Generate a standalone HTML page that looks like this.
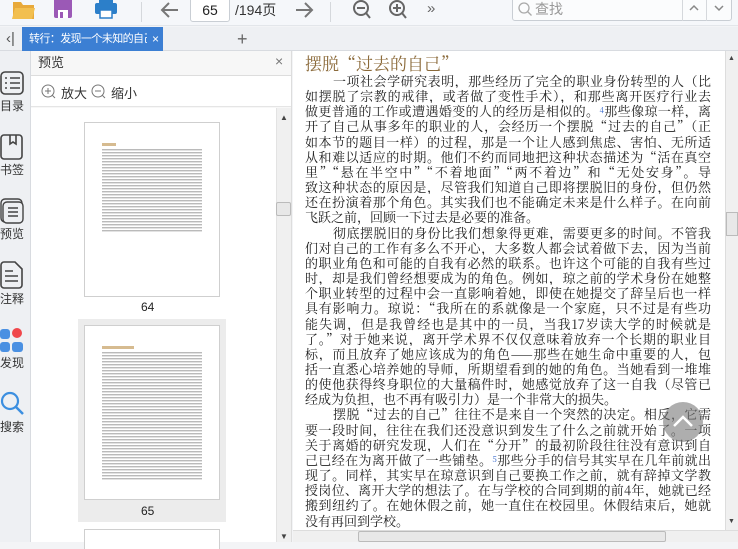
<!DOCTYPE html>
<html><head><meta charset="utf-8">
<style>
*{margin:0;padding:0;box-sizing:border-box}
body{width:738px;height:542px;overflow:hidden;background:#f3f4f6;font-family:"Liberation Sans","Noto Sans CJK SC",sans-serif;position:relative}
.abs{position:absolute}
#tool{left:0;top:0;width:738px;height:26px;background:#f5f7fa;border-bottom:1px solid #e3e6ea}
#tabs{left:0;top:27px;width:738px;height:24px;background:#eef0f3;border-bottom:1px solid #d8dbe0}
#side{left:0;top:51px;width:31px;height:491px;background:#eef0f3;border-right:1px solid #d8dbe0}
.si{position:absolute;left:0;width:30px;font-size:12px;color:#333}
#prev{left:31px;top:51px;width:261px;height:491px;background:#f7f7f7;border-right:1px solid #ddd}
#page{left:293px;top:51px;width:432px;height:479px;background:#fff;padding-top:2px}
.ln{font-family:"Noto Serif CJK SC","Liberation Serif",serif;font-size:13px;color:#222;height:15.17px;line-height:15px;text-align:justify;text-align-last:justify;white-space:nowrap;overflow:hidden;width:406px;margin-left:12px}
.ln.e{text-align-last:left}
.thumb{position:absolute;background:#fff;border:1px solid #cfcfcf}
.tl{position:absolute;background:repeating-linear-gradient(#fff 0,#fff 1.2px,#b5b5b5 1.2px,#c8c8c8 2.4px,#fff 2.4px,#fff 3px)}
</style></head><body>
<div id="tool" class="abs">
 <svg class="abs" style="left:12px;top:0" width="24" height="20"><path d="M1 2h8l2 3h11v14H1z" fill="#e8a93a"/><path d="M3 8h20l-3 11H0z" fill="#f2bf4f"/></svg>
 <svg class="abs" style="left:54px;top:0" width="18" height="19"><rect x="0" y="-2" width="18" height="20" rx="2" fill="#9b59b6"/><rect x="4" y="10" width="10" height="8" fill="#fff"/><rect x="6" y="12" width="3" height="6" fill="#9b59b6"/></svg>
 <svg class="abs" style="left:95px;top:0" width="22" height="19"><rect x="4" y="0" width="14" height="5" fill="#2c7fc9"/><rect x="0" y="3" width="22" height="11" rx="2" fill="#2c7fc9"/><rect x="5" y="10" width="12" height="8" fill="#fff" stroke="#2c7fc9" stroke-width="1.5"/></svg>
 <div class="abs" style="left:141px;top:2px;width:1px;height:20px;background:#d5d8dc"></div>
 <svg class="abs" style="left:160px;top:1px" width="20" height="18"><path d="M18 9H3M9 2L2 9l7 7" stroke="#777" stroke-width="2" fill="none"/></svg>
 <div class="abs" style="left:190px;top:-3px;width:40px;height:25px;background:#fff;border:1px solid #c9ced4;border-radius:3px;font-size:14px;text-align:center;line-height:25px;color:#222">65</div>
 <div class="abs" style="left:235px;top:0;font-size:14px;color:#333;line-height:20px">/194页</div>
 <svg class="abs" style="left:294px;top:1px" width="20" height="18"><path d="M2 9h15M11 2l7 7-7 7" stroke="#777" stroke-width="2" fill="none"/></svg>
 <div class="abs" style="left:330px;top:2px;width:1px;height:20px;background:#d5d8dc"></div>
 <svg class="abs" style="left:352px;top:0" width="20" height="20"><circle cx="9" cy="8" r="7" stroke="#666" stroke-width="2" fill="none"/><path d="M5 8h8M14 13l4 5" stroke="#666" stroke-width="2"/></svg>
 <svg class="abs" style="left:388px;top:0" width="20" height="20"><circle cx="9" cy="8" r="7" stroke="#666" stroke-width="2" fill="none"/><path d="M5 8h8M9 4v8M14 13l4 5" stroke="#666" stroke-width="2"/></svg>
 <div class="abs" style="left:427px;top:0;font-size:15px;color:#666">»</div>
 <div class="abs" style="left:512px;top:-3px;width:220px;height:24px;background:#fbfcfd;border:1px solid #c9ced4;border-radius:3px"></div>
 <svg class="abs" style="left:517px;top:1px" width="16" height="16"><circle cx="7" cy="7" r="5" stroke="#aaa" stroke-width="1.3" fill="none"/><path d="M10.5 10.5l4 4" stroke="#aaa" stroke-width="1.3"/></svg>
 <div class="abs" style="left:535px;top:0;font-size:14px;color:#999;line-height:18px">查找</div>
 <div class="abs" style="left:682px;top:-3px;width:1px;height:24px;background:#d5d8dc"></div>
 <div class="abs" style="left:706px;top:-3px;width:1px;height:24px;background:#d5d8dc"></div>
 <svg class="abs" style="left:688px;top:4px" width="12" height="8"><path d="M2 6l4-4 4 4" stroke="#888" stroke-width="1.5" fill="none"/></svg>
 <svg class="abs" style="left:713px;top:4px" width="12" height="8"><path d="M2 2l4 4 4-4" stroke="#888" stroke-width="1.5" fill="none"/></svg>
</div>
<div id="tabs" class="abs">
 <div class="abs" style="left:6px;top:3px;font-size:15px;color:#555">&lsaquo;|</div>
 <div class="abs" style="left:22px;top:0;width:141px;height:24px;background:#3c7fd3;color:#fff;font-size:11px;letter-spacing:-0.6px;line-height:24px;padding-left:7px;white-space:nowrap;overflow:hidden"><span style="display:inline-block;width:118px;overflow:hidden;vertical-align:top">转行：发现一个未知的自己[www</span></div>
 <div class="abs" style="left:152px;top:0;font-size:12px;color:#fff;line-height:24px">×</div>
 <div class="abs" style="left:237px;top:0;font-size:18px;color:#666;line-height:24px">+</div>
</div>
<div id="side" class="abs">
 <svg class="si" style="top:20px" width="24" height="24"><rect x="1" y="1" width="22" height="22" rx="4" stroke="#444" stroke-width="1.6" fill="none"/><path d="M5 7h2M10 7h10M5 12h2M10 12h10M5 17h2M10 17h10" stroke="#444" stroke-width="1.6"/></svg>
 <div class="si" style="top:46px">目录</div>
 <svg class="si" style="top:83px" width="24" height="26"><rect x="1" y="1" width="21" height="24" rx="3" stroke="#444" stroke-width="1.6" fill="none"/><path d="M10 1v9l3-2 3 2V1" stroke="#444" stroke-width="1.6" fill="none"/></svg>
 <div class="si" style="top:110px">书签</div>
 <svg class="si" style="top:147px" width="26" height="26"><rect x="1" y="1" width="21" height="23" rx="4" stroke="#444" stroke-width="1.4" fill="none"/><rect x="3" y="4" width="20" height="21" rx="4" stroke="#444" stroke-width="1.4" fill="#eef0f3"/><path d="M8 10h10M8 14h10M8 18h10" stroke="#444" stroke-width="1.5"/></svg>
 <div class="si" style="top:174px">预览</div>
 <svg class="si" style="top:210px" width="24" height="28"><path d="M1 4a3 3 0 0 1 3-3h11l7 7v16a3 3 0 0 1-3 3H4a3 3 0 0 1-3-3z" stroke="#444" stroke-width="1.6" fill="none"/><path d="M5 10h8M5 15h13M5 20h13" stroke="#444" stroke-width="1.6"/></svg>
 <div class="si" style="top:239px">注释</div>
 <svg class="si" style="top:276px" width="26" height="26"><rect x="0" y="2" width="10" height="10" rx="3" fill="#4a90e2"/><circle cx="17" cy="6" r="5" fill="#f0474b"/><rect x="0" y="15" width="10" height="10" rx="3" fill="#4a90e2"/><rect x="12" y="15" width="11" height="10" rx="3" fill="#4a90e2"/></svg>
 <div class="si" style="top:303px">发现</div>
 <svg class="si" style="top:340px" width="26" height="26"><circle cx="10" cy="10" r="8" stroke="#3c8fe0" stroke-width="2.2" fill="none"/><path d="M16 16l7 7" stroke="#3c8fe0" stroke-width="2.5"/></svg>
 <div class="si" style="top:367px">搜索</div>
</div>
<div id="prev" class="abs">
 <div class="abs" style="left:0;top:0;width:260px;height:25px;border-bottom:1px solid #ddd;font-size:13px;color:#333;line-height:24px;padding-left:7px">预览</div>
 <div class="abs" style="left:244px;top:2px;font-size:14px;color:#777">×</div>
 <div class="abs" style="left:0;top:25px;width:260px;height:31px;background:#fff;border-bottom:1px solid #e5e5e5"></div>
 <svg class="abs" style="left:10px;top:33px" width="16" height="16"><circle cx="7" cy="7" r="6" stroke="#777" fill="none"/><path d="M4 7h6M7 4v6M11 11l3 3" stroke="#777"/></svg>
 <div class="abs" style="left:30px;top:32px;font-size:13px;color:#333">放大</div>
 <svg class="abs" style="left:60px;top:33px" width="16" height="16"><circle cx="7" cy="7" r="6" stroke="#777" fill="none"/><path d="M4 7h6M11 11l3 3" stroke="#777"/></svg>
 <div class="abs" style="left:80px;top:32px;font-size:13px;color:#333">缩小</div>
 <div class="abs" style="left:0;top:57px;width:245px;height:434px;background:#fff"></div>
 <div class="abs" style="left:245px;top:57px;width:15px;height:434px;background:#f0f0f0;border-left:1px solid #e3e3e3"></div>
 <div class="abs" style="left:249px;top:62px;font-size:8px;color:#444">▲</div>
 <div class="abs" style="left:245px;top:151px;width:15px;height:14px;background:#e8e8e8;border:1px solid #bbb;border-radius:2px"></div>
 <div class="abs" style="left:249px;top:481px;font-size:8px;color:#444">▼</div>
 <div class="thumb" style="left:53px;top:71px;width:136px;height:175px"><div class="abs" style="left:17px;top:20px;width:14px;height:3px;background:#d6bb90"></div><div class="tl" style="left:17px;top:25px;width:100px;height:84px"></div></div>
 <div class="abs" style="left:110px;top:249px;font-size:12px;color:#222">64</div>
 <div class="abs" style="left:47px;top:268px;width:148px;height:203px;background:#ececec"></div>
 <div class="thumb" style="left:53px;top:274px;width:136px;height:175px"><div class="abs" style="left:17px;top:20px;width:32px;height:3px;background:#d6bb90"></div><div class="tl" style="left:17px;top:25px;width:100px;height:130px"></div></div>
 <div class="abs" style="left:110px;top:453px;font-size:12px;color:#222">65</div>
 <div class="thumb" style="left:53px;top:478px;width:136px;height:20px;border-bottom:none"></div>
</div>
<div id="page" class="abs">
 <div style="font-family:'Noto Serif CJK SC','Liberation Serif',serif;font-size:17px;color:#8b6a3a;margin-left:12px;height:20px;line-height:20px">摆脱“过去的自己”</div>
 <div class="ln" style="padding-left:28px">一项社会学研究表明，那些经历了完全的职业身份转型的人（比</div>
 <div class="ln">如摆脱了宗教的戒律，或者做了变性手术），和那些离开医疗行业去</div>
 <div class="ln">做更普通的工作或遭遇婚变的人的经历是相似的。<span style="font-size:8px;color:#36c;vertical-align:top">4</span>那些像琼一样，离</div>
 <div class="ln">开了自己从事多年的职业的人，会经历一个摆脱“过去的自己”（正</div>
 <div class="ln">如本节的题目一样）的过程，那是一个让人感到焦虑、害怕、无所适</div>
 <div class="ln">从和难以适应的时期。他们不约而同地把这种状态描述为“活在真空</div>
 <div class="ln">里”“悬在半空中”“不着地面”“两不着边”和“无处安身”。导</div>
 <div class="ln">致这种状态的原因是，尽管我们知道自己即将摆脱旧的身份，但仍然</div>
 <div class="ln">还在扮演着那个角色。其实我们也不能确定未来是什么样子。在向前</div>
 <div class="ln e">飞跃之前，回顾一下过去是必要的准备。</div>
 <div class="ln" style="padding-left:28px">彻底摆脱旧的身份比我们想象得更难，需要更多的时间。不管我</div>
 <div class="ln">们对自己的工作有多么不开心，大多数人都会试着做下去，因为当前</div>
 <div class="ln">的职业角色和可能的自我有必然的联系。也许这个可能的自我有些过</div>
 <div class="ln">时，却是我们曾经想要成为的角色。例如，琼之前的学术身份在她整</div>
 <div class="ln">个职业转型的过程中会一直影响着她，即使在她提交了辞呈后也一样</div>
 <div class="ln">具有影响力。琼说：“我所在的系就像是一个家庭，只不过是有些功</div>
 <div class="ln">能失调，但是我曾经也是其中的一员，当我17岁读大学的时候就是</div>
 <div class="ln">了。”对于她来说，离开学术界不仅仅意味着放弃一个长期的职业目</div>
 <div class="ln">标，而且放弃了她应该成为的角色——那些在她生命中重要的人，包</div>
 <div class="ln">括一直悉心培养她的导师，所期望看到的她的角色。当她看到一堆堆</div>
 <div class="ln">的使他获得终身职位的大量稿件时，她感觉放弃了这一自我（尽管已</div>
 <div class="ln e">经成为负担，也不再有吸引力）是一个非常大的损失。</div>
 <div class="ln" style="padding-left:28px">摆脱“过去的自己”往往不是来自一个突然的决定。相反，它需</div>
 <div class="ln">要一段时间，往往在我们还没意识到发生了什么之前就开始了。一项</div>
 <div class="ln">关于离婚的研究发现，人们在“分开”的最初阶段往往没有意识到自</div>
 <div class="ln">己已经在为离开做了一些铺垫。<span style="font-size:8px;color:#36c;vertical-align:top">5</span>那些分手的信号其实早在几年前就出</div>
 <div class="ln">现了。同样，其实早在琼意识到自己要换工作之前，就有辞掉文学教</div>
 <div class="ln">授岗位、离开大学的想法了。在与学校的合同到期的前4年，她就已经</div>
 <div class="ln">搬到纽约了。在她休假之前，她一直住在校园里。休假结束后，她就</div>
 <div class="ln e">没有再回到学校。</div>
</div>
<div class="abs" style="left:725px;top:51px;width:13px;height:479px;background:#f0f0f0;border-left:1px solid #ddd"></div>
<div class="abs" style="left:728px;top:55px;font-size:7px;color:#444">▲</div>
<div class="abs" style="left:726px;top:212px;width:12px;height:24px;background:#e8e8e8;border:1px solid #bbb"></div>
<div class="abs" style="left:728px;top:518px;font-size:7px;color:#444">▼</div>
<div class="abs" style="left:293px;top:530px;width:445px;height:12px;background:#f0f0f0;border-top:1px solid #ddd"></div>
<div class="abs" style="left:358px;top:531px;width:308px;height:11px;background:#e8e8e8;border:1px solid #bbb;border-radius:2px"></div>
<div class="abs" style="left:663px;top:402px;width:40px;height:40px;border-radius:50%;background:rgba(120,120,120,0.6)"></div>
<svg class="abs" style="left:671px;top:410px" width="24" height="24"><path d="M3 16l9-9 9 9" stroke="#fff" stroke-width="2.5" fill="none"/></svg>
</body></html>
